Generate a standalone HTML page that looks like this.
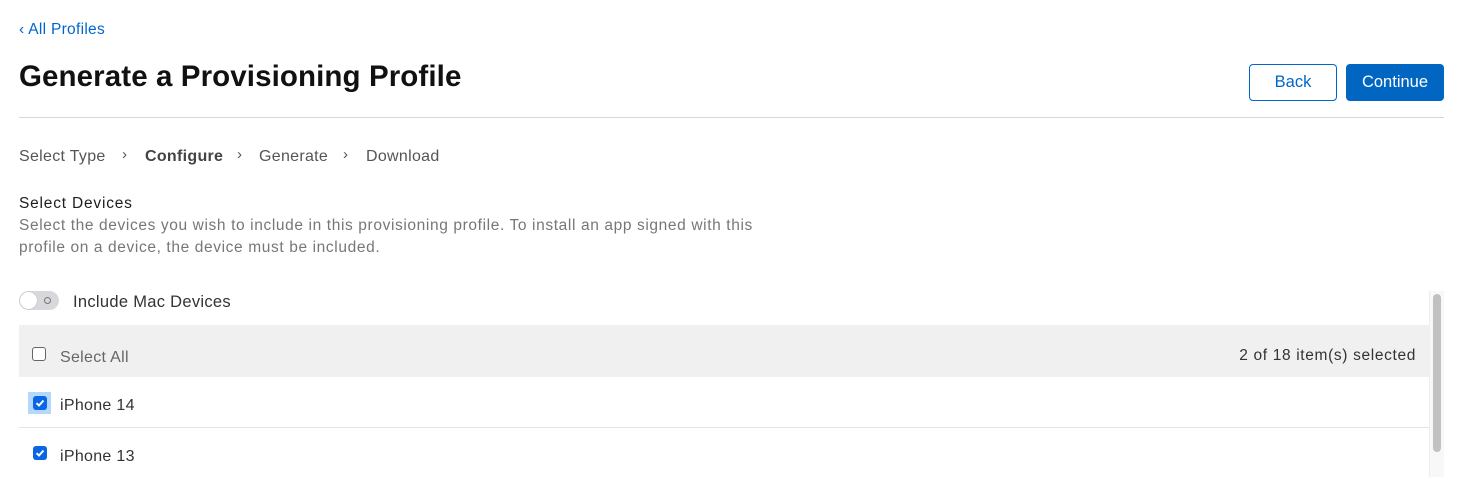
<!DOCTYPE html>
<html><head><meta charset="utf-8"><style>
*{margin:0;padding:0;box-sizing:border-box}
body{width:1467px;height:477px;overflow:hidden;background:#fff;font-family:"Liberation Sans",sans-serif;position:relative;color:#1d1d1f}
.a{position:absolute;white-space:nowrap}
.cb{position:absolute;width:14px;height:14px;border-radius:3px;background:#0a66e4}
.cb svg{position:absolute;left:2px;top:2px}
.t{font-size:16px;letter-spacing:0.3px}
</style></head><body>
<div class="a" style="left:19px;top:21px;font-size:15.5px;color:#0066cc;letter-spacing:0.3px">‹ All Profiles</div>
<div class="a" style="left:19px;top:60px;font-size:29.5px;font-weight:bold;color:#111;letter-spacing:0.1px">Generate a Provisioning Profile</div>
<div class="a" style="left:1249px;top:64px;width:88px;height:37px;border:1px solid #0066cc;border-radius:4px;color:#0066cc;font-size:16.5px;text-align:center;line-height:35px">Back</div>
<div class="a" style="left:1346px;top:64px;width:98px;height:37px;background:#0066c2;border-radius:4px;color:#fff;font-size:16.5px;text-align:center;line-height:37px">Continue</div>
<div class="a" style="left:19px;top:117px;width:1425px;height:1px;background:#d6d6d6"></div>
<div class="a t" style="left:19px;top:148px;color:#555">Select Type</div>
<div class="a" style="left:122px;top:146px;font-size:15px;color:#555">›</div>
<div class="a t" style="left:145px;top:148px;color:#444;font-weight:bold">Configure</div>
<div class="a" style="left:237px;top:146px;font-size:15px;color:#555">›</div>
<div class="a t" style="left:259px;top:148px;color:#555">Generate</div>
<div class="a" style="left:343px;top:146px;font-size:15px;color:#555">›</div>
<div class="a t" style="left:366px;top:148px;color:#555">Download</div>
<div class="a" style="left:19px;top:195px;font-size:15.5px;color:#1d1d1f;letter-spacing:0.8px">Select Devices</div>
<div class="a" style="left:19px;top:215px;font-size:15.5px;color:#777;line-height:22px;letter-spacing:0.62px">Select the devices you wish to include in this provisioning profile. To install an app signed with this<br>profile on a device, the device must be included.</div>
<div class="a" style="left:19px;top:291px;width:40px;height:19px;border-radius:10px;background:#d8d8dc"></div>
<div class="a" style="left:20px;top:292px;width:17px;height:17px;border-radius:50%;background:#fff;box-shadow:0 0 1px rgba(0,0,0,.3)"></div>
<div class="a" style="left:44px;top:297px;width:7px;height:7px;border-radius:50%;border:1px solid #777"></div>
<div class="a t" style="left:73px;top:293px;color:#333;font-size:16.5px">Include Mac Devices</div>
<div class="a" style="left:19px;top:325px;width:1410px;height:52px;background:#f0f0f0"></div>
<div class="a" style="left:32px;top:347px;width:14px;height:14px;border:1.5px solid #666;border-radius:3px;background:#fff"></div>
<div class="a t" style="left:60px;top:349px;color:#666">Select All</div>
<div class="a" style="right:51px;top:347px;font-size:15.5px;color:#333;letter-spacing:0.65px">2 of 18 item(s) selected</div>
<div class="a" style="left:28px;top:392px;width:23px;height:22px;background:#b4d8fc"></div>
<div class="cb" style="left:33px;top:396px"><svg width="10" height="10" viewBox="0 0 10 10"><path d="M1.5 5.2L4 7.5L8.5 2.5" stroke="#fff" stroke-width="2" fill="none"/></svg></div>
<div class="a t" style="left:60px;top:397px;color:#333">iPhone 14</div>
<div class="a" style="left:19px;top:427px;width:1410px;height:1px;background:#e4e4e4"></div>
<div class="cb" style="left:33px;top:446px"><svg width="10" height="10" viewBox="0 0 10 10"><path d="M1.5 5.2L4 7.5L8.5 2.5" stroke="#fff" stroke-width="2" fill="none"/></svg></div>
<div class="a t" style="left:60px;top:448px;color:#333">iPhone 13</div>
<div class="a" style="left:1429px;top:291px;width:15px;height:186px;background:#f8f8f8;border-left:1px solid #eee"></div>
<div class="a" style="left:1433px;top:294px;width:8px;height:158px;border-radius:4px;background:#c1c1c1"></div>
</body></html>
